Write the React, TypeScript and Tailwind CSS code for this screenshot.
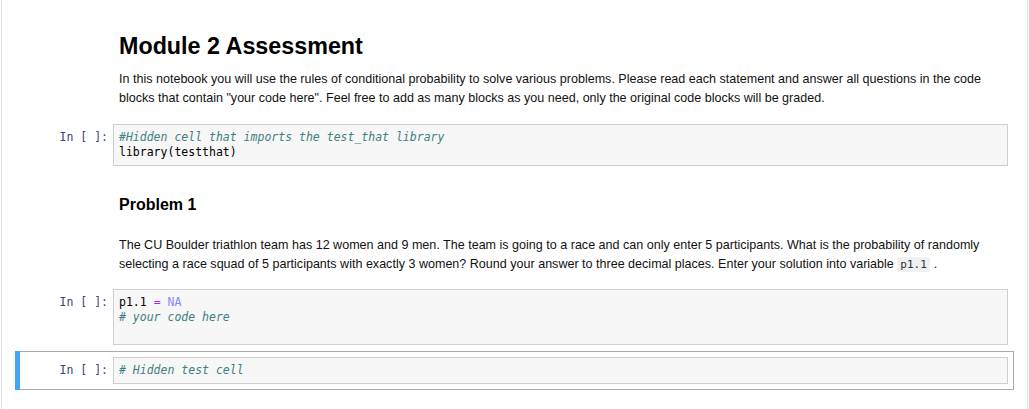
import React from 'react'

const mono = { fontFamily: '"DejaVu Sans Mono", monospace' }

function Prompt() {
  return (
    <div
      className="w-[92px] shrink-0 pr-[5px] pt-[6px] text-right text-[11.5px] leading-[15px] text-[#3a4478]"
      style={mono}
    >
      In&nbsp;[&nbsp;]:
    </div>
  )
}

function CodeCell({
  children,
  selected = false,
  lines = 1,
}: {
  children: React.ReactNode
  selected?: boolean
  lines?: number
}) {
  return (
    <div
      className={`relative flex border p-[5px] ${
        selected ? 'border-[#ababab]' : 'border-transparent'
      }`}
    >
      {selected && (
        <div className="absolute -left-px -top-px -bottom-px w-[5px] bg-[#42a5f5]" />
      )}
      <Prompt />
      <div
        className={`min-w-0 flex-1 border border-[#cfcfcf] bg-[#f7f7f7] px-[5px] pt-[5px] pb-[5px] text-[11.5px] leading-[15px] text-black whitespace-pre ${
          lines === 3 ? 'min-h-[56px]' : ''
        }`}
        style={mono}
      >
        {children}
      </div>
    </div>
  )
}

function Comment({ children }: { children: React.ReactNode }) {
  return <span className="italic text-[#408080]">{children}</span>
}

export default function App() {
  return (
    <div
      className="h-[409px] w-[1029px] overflow-hidden bg-white"
      style={{ fontFamily: '"Liberation Sans", Arial, sans-serif' }}
    >
      <div className="ml-[1px] h-full w-[1027px] border-x border-[#e0e0e0] pl-[13px] pr-[13px]">
        {/* markdown: intro */}
        <div className="flex px-[6px] pt-[32px] pb-[10px]">
          <div className="w-[98px] shrink-0" />
          <div className="flex-1">
            <h1 className="text-[23.3px] font-bold leading-[28px] text-black">
              Module 2 Assessment
            </h1>
            <p className="mt-[10px] text-[12.55px] leading-[19px] text-[#111]">
              In this notebook you will use the rules of conditional probability to solve various problems. Please read each statement and answer all questions in the code blocks that contain "your code here". Feel free to add as many blocks as you need, only the original code blocks will be graded.
            </p>
          </div>
        </div>

        <CodeCell>
          <Comment>#Hidden cell that imports the test_that library</Comment>
          {'\n'}library(testthat)
        </CodeCell>

        {/* markdown: problem 1 */}
        <div className="flex px-[6px] pt-[23px] pb-[9px]">
          <div className="w-[98px] shrink-0" />
          <div className="flex-1">
            <h2 className="text-[16px] font-bold leading-[20px] text-black">Problem 1</h2>
            <p className="mt-[21px] text-[12.55px] leading-[19px] text-[#111]">
              The CU Boulder triathlon team has 12 women and 9 men. The team is going to a race and can only enter 5 participants. What is the probability of randomly selecting a race squad of 5 participants with exactly 3 women? Round your answer to three decimal places. Enter your solution into variable{' '}
              <code
                className="mr-[4px] inline-block rounded-[2px] bg-[#eff0f1] px-[3px] align-baseline text-[11px] leading-[15px] text-[#333]"
                style={mono}
              >
                p1.1
              </code>
              .
            </p>
          </div>
        </div>

        <CodeCell lines={3}>
          p1.1 <span className="text-[#aa22ff]">=</span>{' '}
          <span className="text-[#8888ff]">NA</span>
          {'\n'}
          <Comment># your code here</Comment>
        </CodeCell>

        <CodeCell selected>
          <Comment># Hidden test cell</Comment>
        </CodeCell>
      </div>
    </div>
  )
}
